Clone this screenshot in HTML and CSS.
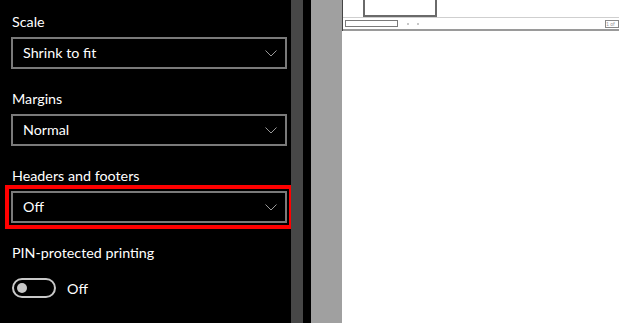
FILE: index.html
```html
<!DOCTYPE html>
<html lang="en">
<head>
  <meta charset="UTF-8" />
  <title>Print</title>
  <link rel="stylesheet" href="styles.css">
</head>
<body>
<div class="window">
  <aside class="settings">
    <div class="field">
      <div class="field-label">Scale</div>
      <div class="select"><span>Shrink to fit</span><svg class="chev" width="12" height="7" viewBox="0 0 12 7"><path d="M0.5 0.5 L6 6 L11.5 0.5" /></svg></div>
    </div>
    <div class="field">
      <div class="field-label">Margins</div>
      <div class="select"><span>Normal</span><svg class="chev" width="12" height="7" viewBox="0 0 12 7"><path d="M0.5 0.5 L6 6 L11.5 0.5" /></svg></div>
    </div>
    <div class="field">
      <div class="field-label">Headers and footers</div>
      <div class="select highlight"><span>Off</span><svg class="chev" width="12" height="7" viewBox="0 0 12 7"><path d="M0.5 0.5 L6 6 L11.5 0.5" /></svg></div>
    </div>
    <div class="field">
      <div class="field-label">PIN-protected printing</div>
      <div class="toggle-row">
        <div class="toggle"><div class="knob"></div></div>
        <span>Off</span>
      </div>
    </div>
  </aside>
  <div class="scrollbar"></div>
  <div class="gutter"></div>
  <div class="preview">
    <div class="page">
      <div class="frame">
        <div class="frame-top"><div class="frame-cell"></div></div>
        <div class="frame-bar">
          <div class="frame-input"></div>
          <span class="dot"></span><span class="dot"></span>
          <div class="frame-count">1 of</div>
        </div>
      </div>
    </div>
  </div>
</div>
</body>
</html>
```

FILE: styles.css
```css
* { box-sizing: border-box; }
html, body { margin:0; height:100%; background:#000; }
body { font-family:'Lato','Noto Sans',sans-serif; font-size:14.3px; color:#fff; overflow:hidden; }
.window { display:flex; height:323px; }

/* settings pane */
.settings { width:291px; padding:12px 0 0 11px; display:flex; flex-direction:column; gap:20px; }
.field-label { line-height:20px; height:20px; margin-bottom:5px; padding-left:1px; }
.select { width:276px; height:32px; border:2px solid #7a7a7a; display:flex; align-items:center; justify-content:space-between; padding:0 8px 0 10px; }
.select span { line-height:20px; }
.chev { display:block; }
.chev path { fill:none; stroke:#9a9a9a; stroke-width:1; }
.highlight { outline:4px solid #f00; outline-offset:2px; }
.toggle-row { display:flex; align-items:center; gap:11px; margin-top:15px; padding-left:1px; }
.toggle { width:44px; height:20px; border:2px solid #c8c8c8; border-radius:10px; display:flex; align-items:center; padding-left:3px; }
.knob { width:10px; height:10px; border-radius:50%; background:#c8c8c8; }

/* preview side */
.scrollbar { width:12px; background:#474747; }
.gutter { width:8px; background:#000; }
.preview { flex:1; background:#a0a0a0; padding-left:31px; display:flex; }
.page { flex:1; background:#fff; }
.frame { border-left:1px solid #444; height:31px; }
.frame-top { height:18px; border-bottom:1px solid #cfcfcf; padding-left:20px; }
.frame-cell { width:74px; height:17px; border:2px solid #6a6a6a; border-top:none; }
.frame-bar { height:13px; border-bottom:2px solid #9a9a9a; display:flex; align-items:center; padding-left:2px; }
.frame-input { width:53px; height:7px; border:1px solid #7a7a7a; margin-right:5px; }
.dot { width:2px; height:2px; background:#c8c8c8; margin:0 4px; }
.frame-count { margin-left:auto; width:14px; height:8px; border:1px solid #888; font-size:5px; line-height:6px; color:#999; overflow:hidden; }
```
